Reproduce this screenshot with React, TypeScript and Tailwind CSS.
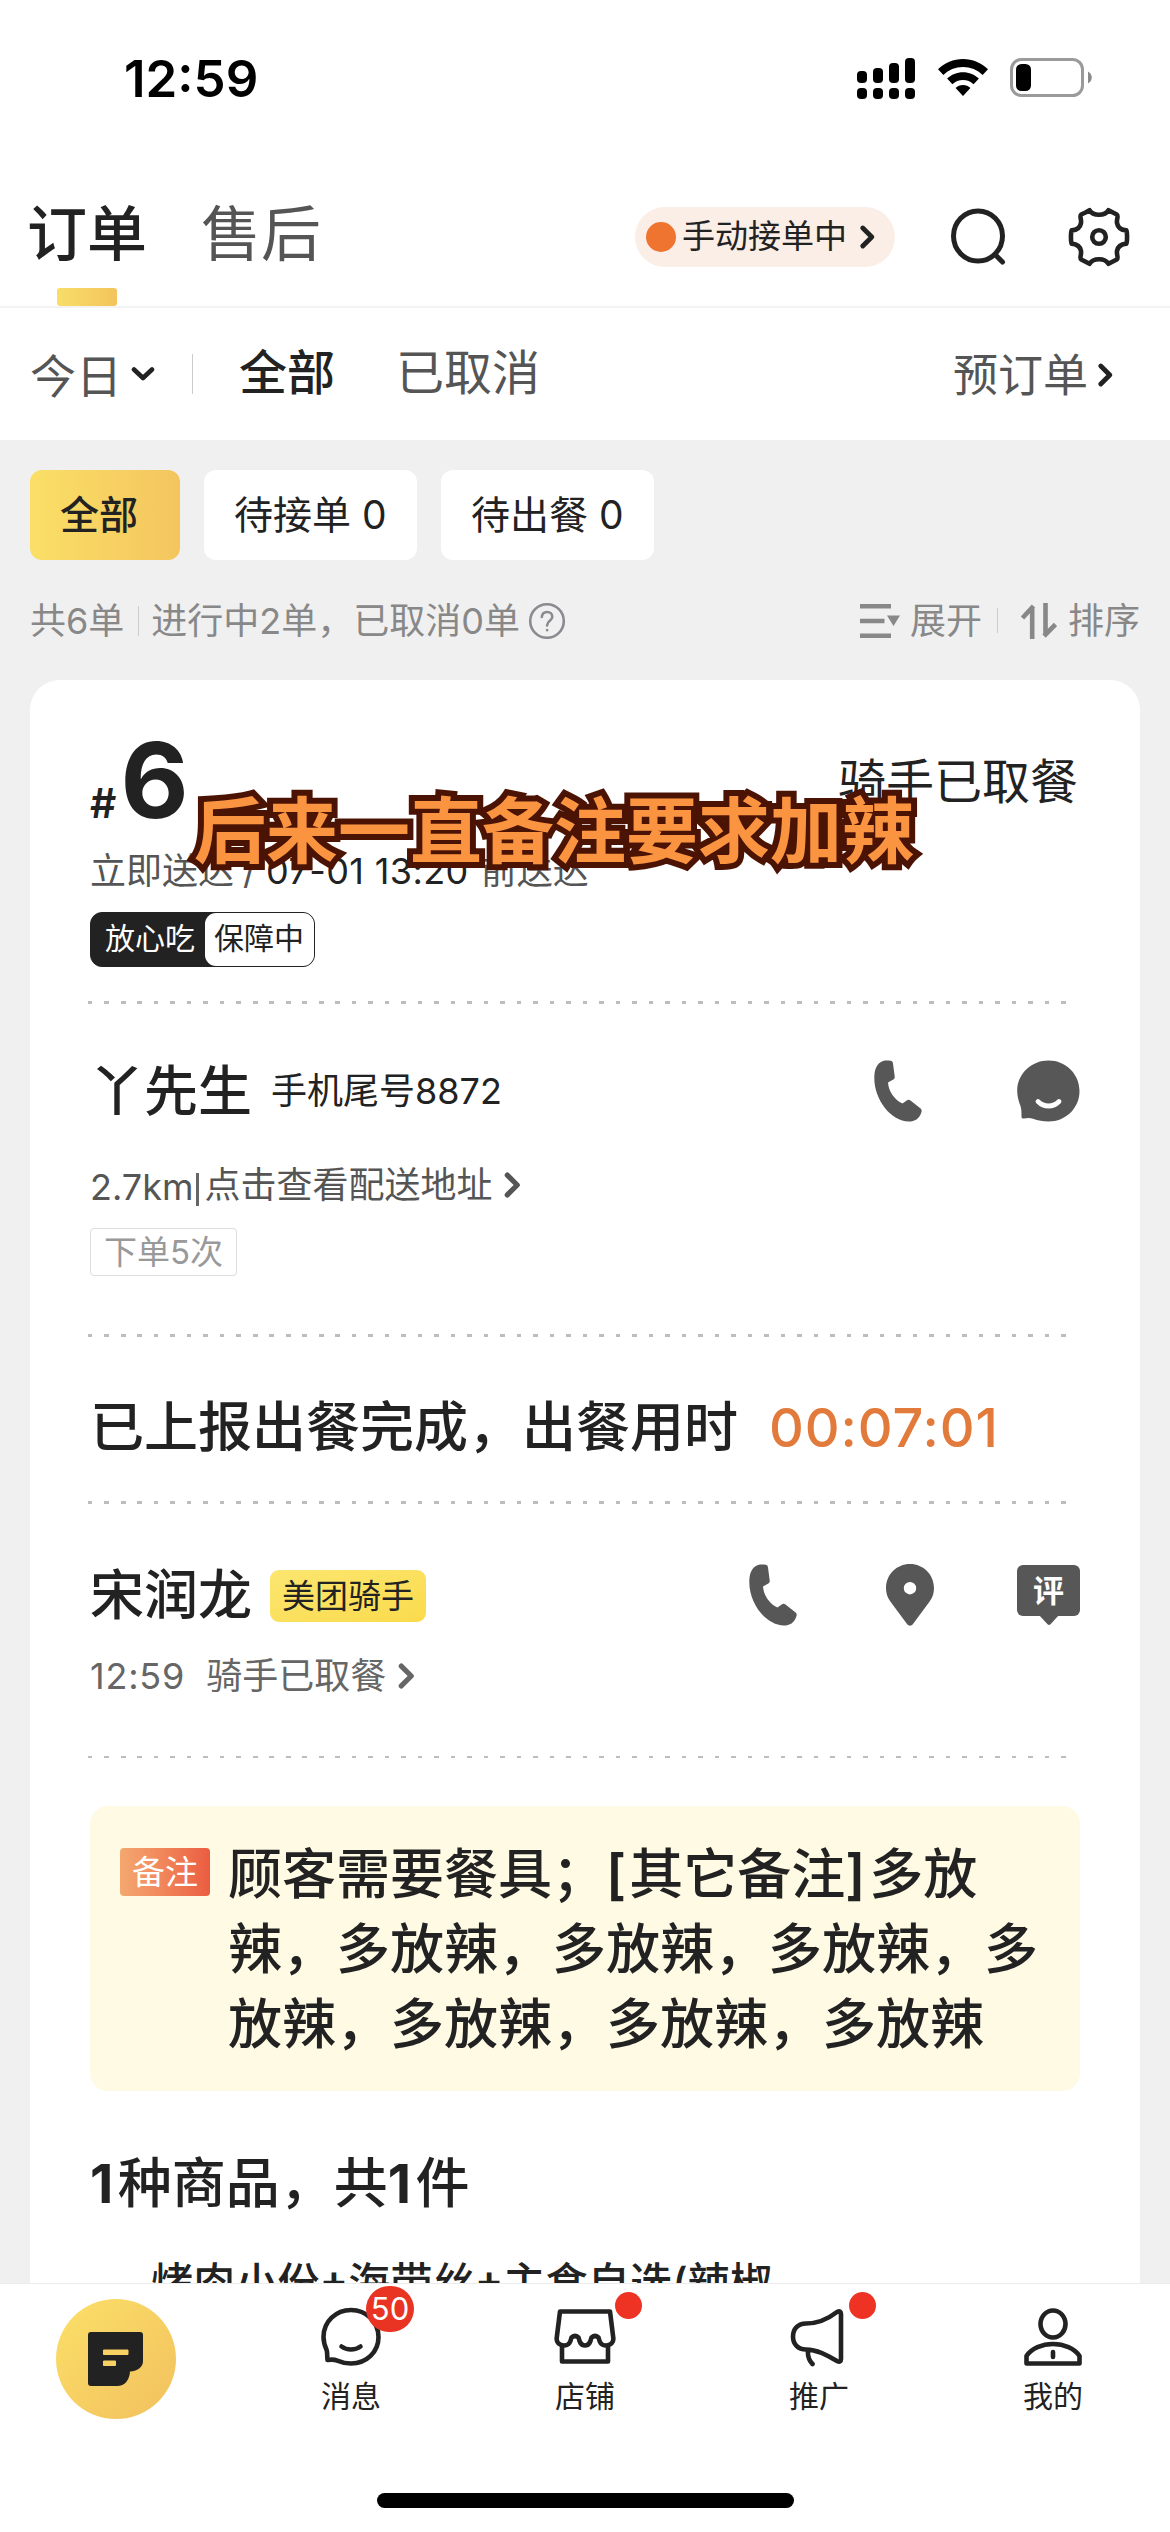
import type { ReactNode } from "react";

const SANS = "font-['Inter','Noto_Sans_CJK_SC',sans-serif]";
const CJK = "font-['Noto_Sans_CJK_SC',sans-serif]";

function Chevron({ className }: { className: string }) {
  return (
    <svg viewBox="0 0 14 22" className={className} fill="none" stroke="currentColor" strokeWidth="4.4" strokeLinecap="round" strokeLinejoin="round">
      <path d="M2.6 2.6 11 11l-8.4 8.4" />
    </svg>
  );
}

function StatusBar() {
  const bars = [12, 15, 20, 25];
  return (
    <header className="flex h-[160px] shrink-0 items-start justify-between pl-[124px] pr-[78px] text-black">
      <span className="pt-[49px] text-[51px] font-semibold leading-[60px] tracking-[0px]">12:59</span>
      <div className="flex items-center pt-[57px]">
        <svg width="58" height="42" viewBox="0 0 58 42">
          {bars.map((h, i) => (
            <g key={h}>
              <rect x={i * 16} y={26 - h} width="10" height={h} rx="4" />
              <rect x={i * 16} y="31" width="10" height="11" rx="4" />
            </g>
          ))}
        </svg>
        <svg width="50" height="38" viewBox="0 0 50 38" className="ml-[23px]">
          <path d="M25 0C15.500 0 6.500 3.700 0 10.300L5.400 16C10.600 10.900 17.500 8 25 8s14.400 2.900 19.600 8l5.400-5.700C43.500 3.700 34.500 0 25 0Z" />
          <path d="M25 13.200c-6.100 0-11.700 2.400-15.900 6.400l5.300 5.600c2.800-2.600 6.500-4.200 10.600-4.200s7.800 1.600 10.600 4.200l5.300-5.600c-4.200-4-9.800-6.400-15.900-6.400Z" />
          <path d="M25 26c-2.900 0-5.500 1.100-7.400 2.900L25 37l7.400-8.100C30.500 27.100 27.900 26 25 26Z" />
        </svg>
        <svg width="82" height="40" viewBox="0 0 82 40" className="ml-[22px]">
          <rect x="1.500" y="1.500" width="71" height="36" rx="10" fill="none" stroke="#9a9a9a" strokeWidth="3" />
          <rect x="6" y="6" width="15" height="27" rx="5.500" />
          <path d="M78 13.500c5 2.500 5 9.500 0 12Z" fill="#8a8a8a" />
        </svg>
      </div>
    </header>
  );
}

function TopTabs() {
  return (
    <div className="flex h-[148px] shrink-0 border-b-2 border-[#f3f3f3] pl-[27px] pr-[39px]">
      <div className="flex w-[120px] flex-col items-center">
        <span className="mt-[29px] h-[99px] text-[60px] font-medium leading-[90px]">订单</span>
        <span className="h-[18px] w-[60px] rounded-[3px] bg-linear-to-r from-[#f8de68] to-[#f3c45d]" />
      </div>
      <span className="ml-[54px] mt-[29px] text-[60px] leading-[90px] text-[#555]">售后</span>
      <div className="ml-auto flex items-center pt-[7px]">
        <div className="flex h-[60px] w-[260px] items-center rounded-full bg-[#fbeee6] pl-[11px]">
          <span className="size-[30px] rounded-full bg-[#ee7430]" />
          <span className="ml-[6px] -mt-[1px] text-[33px] leading-[48px]">手动接单中</span>
          <Chevron className="ml-[13px] h-[24px] w-[15px]" />
        </div>
        <svg width="56" height="58" viewBox="0 0 56 58" className="ml-[56px]" fill="none" stroke="#222" strokeWidth="5" strokeLinecap="round">
          <ellipse cx="27" cy="28" rx="24.500" ry="25" />
          <path d="M44 46.500 51.500 54" />
        </svg>
        <svg width="64" height="60" viewBox="0 0 64 60" className="ml-[60px]" fill="none" stroke="#222" strokeWidth="4.600" strokeLinejoin="round">
          <path d="M18.500 5.500 22.500 3.200c1.800 3 5.300 4.600 9.500 4.600s7.700-1.600 9.500-4.600l8.300 4.300c2 1.500-.4 4.500.2 8.500.8 4.500 4.300 7 9.300 7.400 1 2 1 11.200 0 13.200-5 .4-8.500 2.900-9.300 7.400-.6 4 1.800 7-.2 8.500l-8.300 4.300c-1.800-3-5.300-4.600-9.500-4.600s-7.700 1.600-9.500 4.600l-8.300-4.300c-2-1.500.4-4.500-.2-8.500-.8-4.500-4.300-7-9.300-7.400-1-2-1-11.200 0-13.200 5-.4 8.500-2.900 9.300-7.400.6-4-1.800-7 .2-8.500Z" />
          <circle cx="32" cy="30" r="6.800" />
        </svg>
      </div>
    </div>
  );
}

function FilterRow() {
  return (
    <div className="flex h-[132px] shrink-0 items-center pl-[30px] pr-[57px] text-[#555]">
      <span className="mt-[3px] text-[46px] leading-[66px]">今日</span>
      <svg width="24" height="16" viewBox="0 0 24 16" className="ml-[9px]" fill="none" stroke="#222" strokeWidth="4.600" strokeLinecap="round" strokeLinejoin="round">
        <path d="M3 3.500 12 12l9-8.500" />
      </svg>
      <span className="ml-[37px] h-[40px] w-px bg-[#ccc]" />
      <span className="-mt-[3px] ml-[46px] text-[48px] font-medium leading-[66px] text-[#222]">全部</span>
      <span className="-mt-[3px] ml-[61px] text-[48px] leading-[66px]">已取消</span>
      <span className="mt-[3px] ml-auto text-[45px] leading-[66px]">预订单</span>
      <Chevron className="ml-[10px] mt-[2px] h-[24px] w-[15px] text-[#222]" />
    </div>
  );
}

function Chips() {
  const chip = "flex h-[90px] items-center rounded-[12px] pl-[30px] text-[39px] leading-[56px]";
  return (
    <div className="flex shrink-0 gap-[24px] pl-[30px] pt-[30px]">
      <span className={chip + " w-[150px] bg-linear-to-r from-[#fadf66] to-[#f4c55f] font-medium"}>全部</span>
      <span className={chip + " w-[213px] bg-white whitespace-pre"}>待接单 0</span>
      <span className={chip + " w-[213px] bg-white whitespace-pre"}>待出餐 0</span>
    </div>
  );
}

function Summary() {
  return (
    <div className="flex h-[120px] shrink-0 items-center pl-[30px] pr-[30px] pt-[1px] text-[36px] leading-[54px] text-[#888]">
      <span>共6单</span>
      <span className="ml-[14px] h-[30px] w-px bg-[#ccc]" />
      <span className="ml-[12px]">进行中2单，已取消0单</span>
      <svg width="38" height="38" viewBox="0 0 38 38" className="ml-[8px]" fill="none" stroke="#8a8a90" strokeWidth="2.600" strokeLinecap="round">
        <circle cx="19" cy="19" r="16.800" />
        <path d="M13.800 15c.3-3.200 2.400-5 5.300-5s5.200 1.900 5.200 4.700c0 4.200-5.200 4.100-5.200 8.800M19.100 28v.3" />
      </svg>
      <div className="ml-auto flex items-center">
        <svg width="42" height="36" viewBox="0 0 42 36" fill="#888">
          <path d="M0 1h31v4.600H0ZM0 15.700h24.500v4.600H0ZM0 30.400h31V35H0ZM27 12.500h13L33.500 23Z" />
        </svg>
        <span className="ml-[8px]">展开</span>
        <span className="ml-[15px] h-[25px] w-px bg-[#ccc]" />
        <svg width="36" height="36" viewBox="0 0 36 36" className="ml-[23px]" fill="none" stroke="#888" strokeWidth="4.600">
          <path d="M11.200 36V4M12.500 3 1.500 15M24.500 0v32M23 33l11.500-11.500" />
        </svg>
        <span className="ml-[11px]">排序</span>
      </div>
    </div>
  );
}

/** Row of 4px dots repeated every 16.5px. */
function Dots({ thin = false }: { thin?: boolean }) {
  return (
    <div
      className={
        (thin ? "h-[2px]" : "h-[3px]") +
        " -ml-[2px] w-[980px] shrink-0 bg-[repeating-linear-gradient(to_right,#bdbdbd_0_4.500px,transparent_4.500px_16.500px)]"
      }
    />
  );
}

function PhoneIcon({ className = "" }: { className?: string }) {
  return (
    <svg width="48" height="62" viewBox="0 0 48 62" className={className} fill="#575757">
      <path d="M9 1C3 3 .3 9 .3 18c0 22 17 43.500 34.500 43.500 6 0 10.500-2.500 12.700-9.500.5-1.500 0-2.600-1.200-3.700L36.500 40.500c-1.300-1-2.500-1-3.800-.1l-4.200 3.200C20.500 40 14.500 31 14 22.500l5.300-3c1.200-.7 1.600-1.700 1.400-3L19 3.500C18.800 1.900 18 1.100 16.500.8 14 .4 11.500.3 9 1Z" />
    </svg>
  );
}

function OrderCard() {
  return (
    <section className="mx-[30px] flex w-[1110px] grow flex-col overflow-hidden rounded-t-[30px] bg-white px-[60px]">
      <div className="flex h-[150px] shrink-0 justify-between">
        <div className="mt-[40px] flex items-baseline font-bold leading-[120px]">
          <span className="text-[41px] font-semibold">#</span>
          <span className="ml-[4px] text-[105px]">6</span>
        </div>
        <span className="mr-[2px] mt-[67px] text-[48px] leading-[70px]">骑手已取餐</span>
      </div>
      <div className="mt-[14px] flex h-[54px] shrink-0 text-[36px] leading-[54px] text-[#555]">
        <span>立即送达</span>
        <span className="ml-[9px]">/</span>
        <span className="ml-[10px] tracking-[0.4px] text-[#222]">07-01 13:20</span>
        <span className="ml-[12px]">前送达</span>
      </div>
      <div className="mt-[14px] flex h-[55px] w-[225px] shrink-0 items-stretch rounded-[12px] border-[1.500px] border-[#222] bg-[#222] text-[30px] leading-[50px]">
        <span className="w-[114px] pl-[14px] text-white">放心吃</span>
        <span className="grow rounded-[11px] bg-white pl-[9px]">保障中</span>
      </div>
      <div className="h-[34px] shrink-0" />
      <Dots />

      <div className="mt-[51px] flex h-[72px] shrink-0 items-center">
        <span className="text-[54px] font-medium">丫先生</span>
        <span className="ml-[19px] text-[36px]">手机尾号8872</span>
        <PhoneIcon className="ml-auto -mt-[1px]" />
        <svg width="64" height="62" viewBox="0 0 64 62" className="ml-[94px] -mt-[1px]" fill="#575757">
          <path d="M32.500.5C15 .5 1.200 14 1.200 31c0 6 1.800 11.300 3.300 15 1 3 1 7 1 10.500 0 1.500.8 2.200 2.200 2 3-.3 6-.9 9.300.3 5 2 10 2.700 15.500 2.700C50 61.500 63.500 48 63.500 31S50 .5 32.500.5Z" />
          <path d="M22 41.500c6 6 15 6 21 0" fill="none" stroke="#fff" strokeWidth="4.800" strokeLinecap="round" />
        </svg>
      </div>
      <div className="mt-[31px] flex h-[54px] shrink-0 items-center text-[36px] text-[#555]">
        <span className="mt-[4px]">2.7km</span>
        <span className="ml-[3px] mt-[9px] mr-[5px] h-[33px] w-[3px] bg-[#666]" />
        <span>点击查看配送地址</span>
        <Chevron className="ml-[11px] h-[26px] w-[17px]" />
      </div>
      <div className="mt-[16px] flex h-[48px] w-[147px] shrink-0 items-center justify-center rounded-[4px] border-[1.500px] border-[#ddd] text-[33px] leading-[44px] text-[#999]">
        下单5次
      </div>
      <div className="h-[58px] shrink-0" />
      <Dots />

      <div className="flex h-[164px] shrink-0 items-center pt-[17px] text-[54px] font-medium">
        <span>已上报出餐完成，出餐用时</span>
        <span className="ml-[31px] tracking-[0.9px] text-[#e27a3b]">00:07:01</span>
      </div>
      <Dots />

      <div className="mt-[55px] flex h-[72px] shrink-0 items-center">
        <span className="text-[54px] font-medium">宋润龙</span>
        <span className="mt-[2px] ml-[18px] flex h-[52px] w-[156px] items-center justify-center rounded-[9px] bg-linear-to-br from-[#fbe66f] to-[#fbdb4c] text-[33px] leading-[50px]">美团骑手</span>
        <PhoneIcon className="ml-auto" />
        <svg width="48" height="62" viewBox="0 0 48 62" className="ml-[89px]" fill="#575757">
          <path fillRule="evenodd" d="M24 0C10.500 0 0 10.700 0 24c0 5 1.300 9 4 13l17 23c1.700 2.300 4.300 2.300 6 0l17-23c2.700-4 4-8 4-13C48 10.700 37.500 0 24 0Zm0 18a6.200 6.200 0 1 1 0 12.400A6.200 6.200 0 0 1 24 18Z" />
        </svg>
        <span className="relative ml-[83px] flex h-[51px] w-[63px] -mt-[9px] items-center justify-center rounded-[6px] bg-[#575757] text-[31px] font-bold leading-[44px] text-white">
          评
          <svg width="20" height="11" viewBox="0 0 20 11" className="absolute left-[22px] top-[50px]" fill="#575757">
            <path d="M0 0h20L11.500 9.300c-1 1-2 1-3 0Z" />
          </svg>
        </span>
      </div>
      <div className="mt-[18px] flex h-[54px] shrink-0 items-center text-[36px] text-[#666]">
        <span className="tracking-[0.8px]">12:59</span>
        <span className="ml-[21px]">骑手已取餐</span>
        <Chevron className="ml-[12px] h-[26px] w-[17px]" />
      </div>
      <div className="h-[53px] shrink-0" />
      <Dots thin />

      <div className="mt-[48px] flex h-[285px] w-[990px] shrink-0 rounded-[18px] bg-[#fefae3] pl-[30px] pt-[30px]">
        <span className="mt-[12px] flex h-[48px] w-[90px] items-center justify-center rounded-[4px] bg-linear-to-r from-[#f4a870] to-[#ea5c41] text-[33px] leading-[46px] text-white">备注</span>
        <p className="ml-[18px] w-[830px] pt-[1px] text-[54px] font-medium leading-[75px]">
          顾客需要餐具；<span className="font-semibold tracking-[3px]">[</span>其它备注<span className="font-semibold tracking-[4px]">]</span>多放<br />辣，多放辣，多放辣，多放辣，多<br />放辣，多放辣，多放辣，多放辣
        </p>
      </div>

      <h2 className="mt-[53px] h-[80px] shrink-0 text-[54px] font-medium leading-[80px]">
        <b className="font-bold tracking-[4.500px]">1</b>种商品，共<b className="font-bold tracking-[4.500px]">1</b>件
      </h2>
      <p className="ml-[61px] mt-[29px] shrink-0 text-[42px] font-medium leading-[60px] tracking-[0.200px]">
        烤肉小份<span className="relative -top-[3px] font-semibold">+</span>海带丝<span className="relative -top-[3px] font-semibold">+</span>主食自选(辣椒
      </p>
    </section>
  );
}

function NavItem({ label, children }: { label: string; children: ReactNode }) {
  return (
    <div className="flex w-[234px] flex-col items-center">
      <div className="relative mt-[23px] h-[60px] w-[62px]">{children}</div>
      <span className="mt-[7px] text-[30px] leading-[44px]">{label}</span>
    </div>
  );
}

const LINE = {
  width: 62,
  height: 60,
  viewBox: "0 0 62 60",
  fill: "none",
  stroke: "#222",
  strokeWidth: 4.6,
  strokeLinecap: "round" as const,
  strokeLinejoin: "round" as const,
};

function BottomNav() {
  return (
    <nav className="flex h-[249px] shrink-0 flex-col border-t-[1.500px] border-[#ececec] bg-white">
      <div className="flex h-[209px]">
        <div className="flex w-[234px] justify-center pr-[2px] pt-[15px]">
          <div className="flex size-[120px] items-center justify-center rounded-full bg-linear-to-br from-[#fbe068] to-[#f2c05e]">
            <svg width="56" height="54" viewBox="0 0 56 54">
              <path d="M3 0h49q3 0 3 3v26c0 6-5 10-13 10.500C41.500 48 37 54 29 54H3q-3 0-3-3V3q0-3 3-3Z" fill="#222" />
              <path d="M15.500 18h24.500v4.500H15.500ZM15.500 29h12v4.500h-12Z" fill="#f7d163" stroke="#f7d163" strokeLinejoin="round" />
            </svg>
          </div>
        </div>
        <NavItem label="消息">
          <svg {...LINE}>
            <path d="M31 3C16 3 3.500 14.500 3.500 30c0 6 1.600 9.500 3.200 13.200.7 2 .3 5.500.8 9.800 3-.6 7.200-.5 10.500.8 4 1.700 8.500 2.700 13 2.700 15.500 0 27.500-11.500 27.500-26.500S46.500 3 31 3Z" />
            <path d="M21.500 39.500c5.500 4 13.500 4 19 0" />
          </svg>
          <span className="absolute -top-[21px] left-[46px] flex h-[46px] w-[48px] items-center justify-center rounded-full bg-[#e93423] text-[31px] text-white">50</span>
        </NavItem>
        <NavItem label="店铺">
          <svg {...LINE}>
            <path d="M6 4.500h50L59.300 31c.5 4.500-2.700 7.500-7.300 7.500-5.500 0-6.500-4-7.500-8q-3.500-3-7 0c-1 4-2 8-6.500 8s-5.500-4-6.500-8q-3.500-3-7 0c-1 4-2 8-7.500 8-4.600 0-7.800-3-7.300-7.500ZM8 38.500V54.500h46V38.500" />
          </svg>
          <span className="absolute -top-[15px] left-[61px] size-[27px] rounded-full bg-[#ee3224]" />
        </NavItem>
        <NavItem label="推广">
          <svg {...LINE}>
            <path d="M18 16.500C29 16.500 40 12 49 5q4-2 4 2v45q0 4-4 2C39 48 29 42.500 18 42.500 10 42.500 5 37 5 29.500S10 16.500 18 16.500ZM20 43c-.5 5 1 10.500 4.500 14" />
          </svg>
          <span className="absolute -top-[15px] left-[61px] size-[27px] rounded-full bg-[#ee3224]" />
        </NavItem>
        <NavItem label="我的">
          <svg {...LINE}>
            <ellipse cx="31" cy="17" rx="12.500" ry="13.500" />
            <path d="M4.500 56.500V49c5-7.500 15.500-12 26.500-12s21.500 4.500 26.500 12v7.500ZM31 45v5" />
          </svg>
        </NavItem>
      </div>
      <div className="mx-auto h-[15px] w-[417px] rounded-full bg-black" />
    </nav>
  );
}

export default function App() {
  return (
    <div className={SANS + " relative flex h-[2532px] w-[1170px] flex-col overflow-hidden bg-white text-[#222]"}>
      <StatusBar />
      <TopTabs />
      <FilterRow />
      <main className="flex min-h-0 grow flex-col bg-[#f0f0f0]">
        <Chips />
        <Summary />
        <OrderCard />
      </main>
      <BottomNav />
      <div
        className={
          CJK +
          " absolute left-[194px] top-[773px] whitespace-nowrap text-[72px] font-bold leading-[106px] text-[#fb9440] [-webkit-text-stroke:12px_#4b1304] [paint-order:stroke_fill] [stroke-linejoin:round]"
        }
      >
        后来一直备注要求加辣
      </div>
    </div>
  );
}
